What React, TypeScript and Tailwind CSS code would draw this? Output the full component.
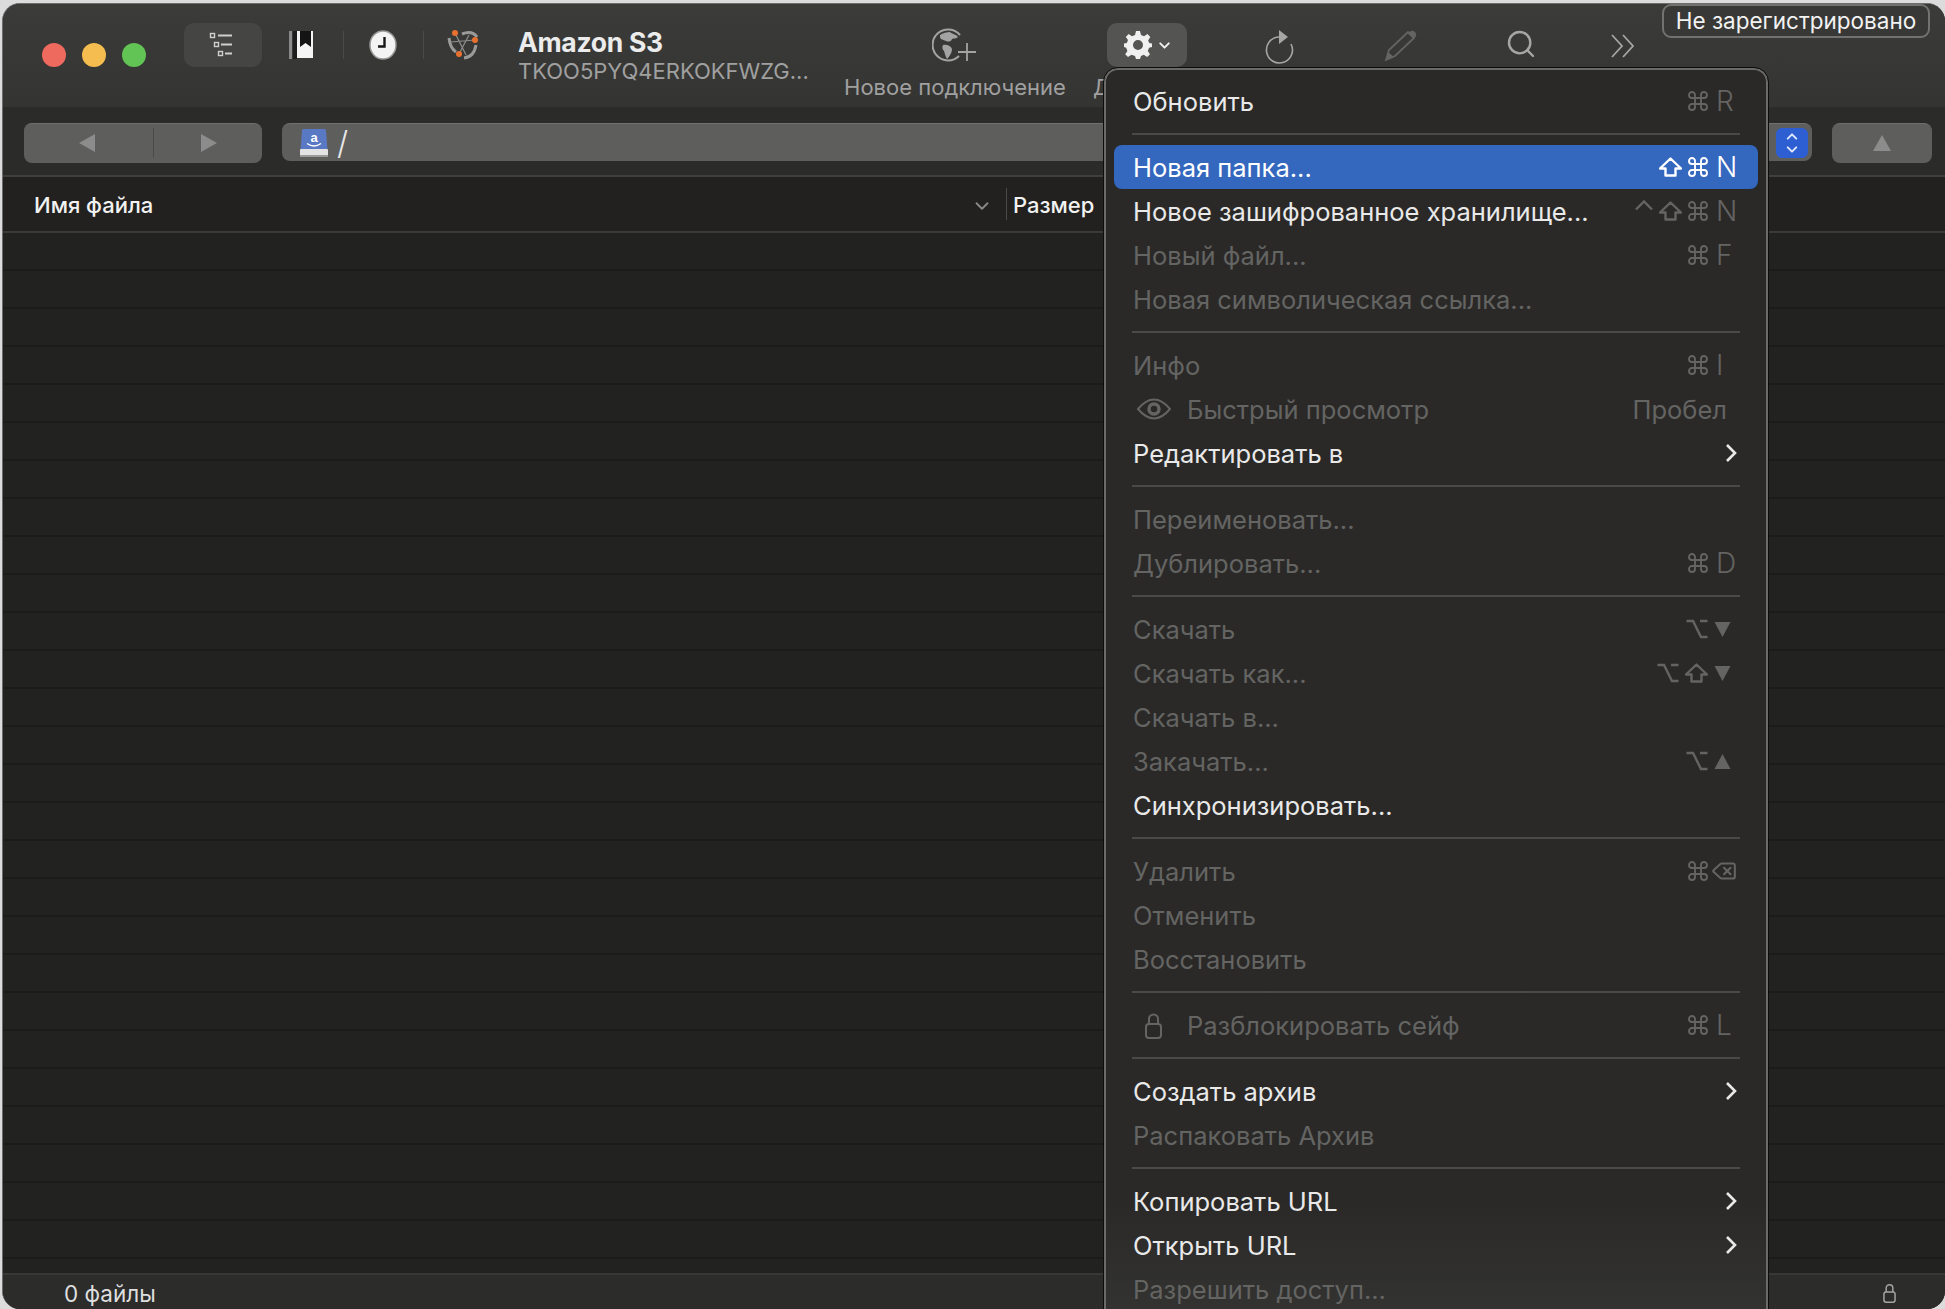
import React from "react";
import { Command, ChevronUp, ChevronDown, Delete, Search } from "lucide-react";

type Mod = "ctrl" | "opt" | "shift" | "cmd";
type Item = {
  t: string;
  on?: boolean;
  sel?: boolean;
  mods?: Mod[];
  key?: string;
  sub?: boolean;
  icon?: "eye" | "lock";
  side?: string;
};
type Section = Item[];

const sections: Section[] = [
  [{ t: "Обновить", on: true, mods: ["cmd"], key: "R" }],
  [
    { t: "Новая папка...", on: true, sel: true, mods: ["shift", "cmd"], key: "N" },
    { t: "Новое зашифрованное хранилище...", on: true, mods: ["ctrl", "shift", "cmd"], key: "N" },
    { t: "Новый файл...", mods: ["cmd"], key: "F" },
    { t: "Новая символическая ссылка..." },
  ],
  [
    { t: "Инфо", mods: ["cmd"], key: "I" },
    { t: "Быстрый просмотр", icon: "eye", side: "Пробел" },
    { t: "Редактировать в", on: true, sub: true },
  ],
  [{ t: "Переименовать..." }, { t: "Дублировать...", mods: ["cmd"], key: "D" }],
  [
    { t: "Скачать", mods: ["opt"], key: "down" },
    { t: "Скачать как...", mods: ["opt", "shift"], key: "down" },
    { t: "Скачать в..." },
    { t: "Закачать...", mods: ["opt"], key: "up" },
    { t: "Синхронизировать...", on: true },
  ],
  [{ t: "Удалить", mods: ["cmd"], key: "del" }, { t: "Отменить" }, { t: "Восстановить" }],
  [{ t: "Разблокировать сейф", icon: "lock", mods: ["cmd"], key: "L" }],
  [{ t: "Создать архив", on: true, sub: true }, { t: "Распаковать Архив" }],
  [
    { t: "Копировать URL", on: true, sub: true },
    { t: "Открыть URL", on: true, sub: true },
    { t: "Разрешить доступ..." },
  ],
];

function ModIcon({ m }: { m: Mod }) {
  if (m === "cmd") return <Command size={24} strokeWidth={1.900} className="-mx-[2px]" />;
  if (m === "opt")
    return (
      <svg width="22" height="20" viewBox="0 0 22 20" fill="none" stroke="currentColor" strokeWidth="2.400">
        <path d="M0.500 2h6.500l8 16h6.500M14 2h7.500" />
      </svg>
    );
  if (m === "shift")
    return (
      <svg width="23" height="20" viewBox="0 0 23 20" fill="none" stroke="currentColor" strokeWidth="2.400" strokeLinejoin="round">
        <path d="M11.500 1.500L22 11.500h-5.500v7h-10v-7H1z" />
      </svg>
    );
  return (
    <svg width="18" height="20" viewBox="0 0 18 20" fill="none" stroke="currentColor" strokeWidth="2.400" className="-mt-[6px]">
      <path d="M1 11.500L9 3.500l8 8" />
    </svg>
  );
}

function KeyCap({ k }: { k: string }) {
  if (k === "down")
    return (
      <svg width="17" height="17" viewBox="0 0 17 17">
        <path d="M0.500 1h16L8.500 16z" fill="currentColor" />
      </svg>
    );
  if (k === "up")
    return (
      <svg width="17" height="17" viewBox="0 0 17 17">
        <path d="M0.500 16h16L8.500 1z" fill="currentColor" />
      </svg>
    );
  if (k === "del") return <Delete size={26} strokeWidth={1.900} className="-ml-[3px]" />;
  return <span className="pl-[2px] text-[28px] leading-none font-light">{k}</span>;
}

function LockGlyph({ w, h }: { w: number; h: number }) {
  return (
    <svg width={w} height={h} viewBox="0 0 17 27" fill="none" stroke="currentColor" strokeWidth="2">
      <path d="M4 12V7a4.500 4.500 0 019 0v5" />
      <rect x="1" y="12" width="15" height="14" rx="3" />
    </svg>
  );
}

function EyeGlyph() {
  return (
    <svg width="34" height="24" viewBox="0 0 34 24" fill="none" stroke="currentColor">
      <path d="M1 12Q17-7 33 12 17 31 1 12z" strokeWidth="2" />
      <circle cx="17" cy="12" r="5" strokeWidth="3.500" />
    </svg>
  );
}

function MenuRow({ item }: { item: Item }) {
  const textColor = item.sel ? "text-white" : item.on ? "text-[#e9e9e9]" : "text-[#646462]";
  const shortcutColor = item.sel ? "text-white" : "text-[#646462]";
  return (
    <div
      className={`mx-[8px] flex h-[44px] shrink-0 items-center rounded-[8px] pl-[19px] ${item.sel ? "bg-[#3467be]" : ""} ${textColor}`}
    >
      {item.icon === "eye" && (
        <div className="flex w-[54px] shrink-0 items-center pl-[4px]">
          <EyeGlyph />
        </div>
      )}
      {item.icon === "lock" && (
        <div className="flex w-[54px] shrink-0 items-center pl-[12px]">
          <LockGlyph w={17} h={27} />
        </div>
      )}
      <span className="flex-1 truncate pt-[2px]">{item.t}</span>
      {item.side && <span className={`pt-[2px] pr-[31px] ${shortcutColor}`}>{item.side}</span>}
      {item.mods && (
        <div className={`flex items-center justify-end gap-[6px] ${shortcutColor}`}>
          {item.mods.map((m) => (
            <ModIcon key={m} m={m} />
          ))}
        </div>
      )}
      {item.key && (
        <div className={`flex w-[50px] shrink-0 items-center pl-[6px] ${shortcutColor}`}>
          <KeyCap k={item.key} />
        </div>
      )}
      {item.sub && (
        <div className="flex w-[33px] shrink-0 items-center text-[#e9e9e9]">
          <svg width="12" height="20" viewBox="0 0 12 20" fill="none" stroke="currentColor" strokeWidth="2.600">
            <path d="M2 2l8 8-8 8" />
          </svg>
        </div>
      )}
    </div>
  );
}

function BookmarkIcon() {
  return (
    <svg width="26" height="30" viewBox="0 0 26 30">
      <rect x="0" y="1" width="3" height="28" fill="#8a8a8a" />
      <rect x="4" y="1" width="4" height="28" fill="#1d1d1d" />
      <path d="M8 1h16v27H8z" fill="#f4f4f4" />
      <path d="M11 1h11v16l-5.500-4-5.500 4z" fill="#141414" />
    </svg>
  );
}

function ClockIcon() {
  return (
    <svg width="28" height="30" viewBox="0 0 28 30">
      <ellipse cx="14" cy="15" rx="13" ry="14" fill="#f3f3f3" stroke="#9a9a9a" strokeWidth="1.500" />
      <path d="M15.500 7v9.500H9" fill="none" stroke="#161616" strokeWidth="2.400" />
    </svg>
  );
}

function NetworkIcon() {
  return (
    <svg width="32" height="30" viewBox="0 0 32 30" fill="none">
      <path d="M15 4Q25 0 30 7M2 8Q3 18 9 22M17 28Q27 27 29 15" stroke="#9a9a9a" strokeWidth="3" />
      <path d="M8 3l11 22M28 10L4 12M12 24L22 5" stroke="#8e8e8e" strokeWidth="1.200" />
      <circle cx="8" cy="3" r="3" fill="#e8702f" />
      <circle cx="28" cy="10" r="3" fill="#e8702f" />
      <circle cx="12" cy="24" r="3" fill="#e8702f" />
    </svg>
  );
}

function TreeIcon() {
  return (
    <svg width="24" height="28" viewBox="0 0 24 28" fill="none" stroke="#cfcfcf">
      <rect x="1.500" y="2.500" width="4" height="4" strokeWidth="1.400" />
      <path d="M9 4.500h14" strokeWidth="1.800" />
      <rect x="5.500" y="11.500" width="4" height="4" strokeWidth="1.400" />
      <path d="M12 13.500h11" strokeWidth="1.800" />
      <rect x="9.500" y="20.500" width="4" height="4" strokeWidth="1.400" />
      <path d="M16 22.500h7" strokeWidth="1.800" />
    </svg>
  );
}

function GlobeAdd() {
  return (
    <svg width="46" height="36" viewBox="0 0 46 36" fill="none">
      <path d="M27 28A15.500 15.500 0 1128 7" stroke="#a3a3a3" strokeWidth="2" />
      <path d="M8 7c3-2 7-3 10-3 2 2 6 2 8 5-2 2-4 1-6 2-1 3-4 3-6 2l-5-2c-1-1-1-2-1-4z" fill="#a3a3a3" />
      <path d="M11 17c4-1 8 1 9 4 0 4-3 8-5 10-2-3-2-6-3-8-2-2-2-4-1-6z" fill="#a3a3a3" />
      <path d="M35 15v18M26 24h18" stroke="#a3a3a3" strokeWidth="1.800" />
    </svg>
  );
}

function GearIcon() {
  return (
    <svg width="28" height="28" viewBox="0 0 28 28">
      <path
        fillRule="evenodd"
        fill="#f0f0f0"
        d="M12 0h4l1 4 3 1.300 3.500-2.200 2.800 2.800L24.100 9.400 25.300 12 28 12.500v3.500l-2.900.800L23.800 20l2.200 3.200-2.800 2.800-3.500-2.200L17 25l-1 3h-4l-1-3-3.500-1.200L4 26l-2.800-2.800L3.400 20l-1.200-3.200L0 16v-3.500l2.800-.600L4 9 1.800 5.900 4.600 3.100 8 5.300 11 4zM14 9a5 5 0 100 10 5 5 0 000-10z"
      />
    </svg>
  );
}

function ReloadIcon() {
  return (
    <svg width="32" height="38" viewBox="0 0 32 38" fill="none" className="absolute top-[26px] left-[1263px]">
      <path d="M16 11A13 13 0 1028 18" stroke="#a6a6a6" strokeWidth="1.600" />
      <path d="M16 4l9 7-9 7z" fill="#a6a6a6" />
    </svg>
  );
}

function PencilIcon() {
  return (
    <svg width="34" height="34" viewBox="0 0 34 34" fill="none" className="absolute top-[28px] left-[1384px]">
      <path d="M2 32l3-10L24 4l6 6L11 28z" stroke="#646462" strokeWidth="1.800" />
      <path d="M2 32l2-8 6 5z" fill="#646462" />
      <path d="M26 3.500a4 4 0 015.500 5.500l-2 2-5.500-5.500z" fill="#646462" />
    </svg>
  );
}

function DoubleChevron() {
  return (
    <svg width="24" height="24" viewBox="0 0 24 24" fill="none" stroke="#a6a6a6" strokeWidth="1.800" className="absolute top-[34px] left-[1611px]">
      <path d="M1 1l10 11L1 23M12 1l10 11-10 11" />
    </svg>
  );
}

function DiskIcon() {
  return (
    <svg width="30" height="30" viewBox="0 0 30 30">
      <path d="M3 2.500Q3 1 4.500 1h21Q27 1 27 2.500L28.500 22H1.500z" fill="#5a79c5" />
      <rect x="1" y="21" width="28" height="8" rx="1" fill="#e4e4e4" />
      <rect x="1" y="27" width="28" height="2" fill="#9c9c9c" />
      <path d="M8 15.500q7 5 14 0" stroke="#fff" fill="none" strokeWidth="1.300" />
      <text x="15" y="14" textAnchor="middle" fontSize="13" fontWeight="700" fill="#fff" fontFamily="Liberation Sans, sans-serif">a</text>
    </svg>
  );
}

function Sep() {
  return (
    <div className="mx-[26px] flex h-[22px] shrink-0 items-center">
      <div className="h-[2px] w-full bg-[#4a4a48]" />
    </div>
  );
}

export default function App() {
  return (
    <div className="relative h-[1309px] w-[1945px] overflow-hidden bg-[#dcdcdc] font-['Inter','Noto_Sans',sans-serif]">
      {/* Window */}
      <div className="mt-[3px] ml-[2px] flex h-[1306px] w-[1943px] flex-col overflow-hidden rounded-[18px] border border-r-0 border-b-0 border-[#6d6d6d] bg-[#222120]">
        {/* Title bar */}
        <div className="flex h-[103px] shrink-0 items-start bg-gradient-to-b from-[#3b3b39] to-[#343432] text-[#a0a0a0]">
          <div className="mt-[39px] ml-[39px] flex gap-[16px]">
            <div className="h-[24px] w-[24px] rounded-full bg-[#ee6a5f]" />
            <div className="h-[24px] w-[24px] rounded-full bg-[#f5bd4f]" />
            <div className="h-[24px] w-[24px] rounded-full bg-[#61c454]" />
          </div>
          <div className="mt-[19px] ml-[38px] flex h-[44px] w-[78px] items-center justify-center rounded-[10px] bg-[#454543] pr-[4px]">
            <TreeIcon />
          </div>
          <div className="mt-[26px] ml-[27px] flex h-[30px] items-center">
            <BookmarkIcon />
          </div>
          <div className="mt-[27px] ml-[28px] h-[28px] w-[1px] bg-[#4a4a48]" />
          <div className="mt-[26px] ml-[25px] flex h-[30px] items-center">
            <ClockIcon />
          </div>
          <div className="mt-[27px] ml-[26px] h-[28px] w-[1px] bg-[#4a4a48]" />
          <div className="mt-[26px] ml-[23px] flex h-[30px] items-center">
            <NetworkIcon />
          </div>
          <div className="mt-[20px] ml-[39px] flex w-[313px] flex-col">
            <span className="h-[36px] text-[26.500px] leading-[36px] font-bold tracking-[-0.3px] text-[#ececec]">Amazon S3</span>
            <span className="-mt-[4px] h-[30px] text-[22px] leading-[30px] text-[#a0a0a0]">TKOO5PYQ4ERKOKFWZG...</span>
          </div>
          <div className="mt-[24px] flex w-[248px] flex-col items-center">
            <GlobeAdd />
            <span className="mt-[9px] text-[22px] leading-[28px] whitespace-nowrap">Новое подключение</span>
          </div>
          <span className="mt-[69px] ml-[14px] text-[22px] leading-[28px]">Д</span>
        </div>

        {/* Address bar */}
        <div className="flex h-[70px] shrink-0 items-start border-b-2 border-[#3f3f3e] bg-[#2b2b2a] pt-[16px]">
          <div className="ml-[21px] flex h-[40px] w-[238px] items-center rounded-[8px] border-t border-[#6e6e6e] bg-[#5e5e5d] pb-[2px] text-[#8c8c8c]">
            <svg width="16" height="18" viewBox="0 0 16 18" className="ml-[55px]">
              <path d="M0 9L16 0v18z" fill="currentColor" />
            </svg>
            <div className="ml-[58px] h-[30px] w-[1px] bg-[#4a4a4a]" />
            <svg width="16" height="18" viewBox="0 0 16 18" className="ml-[47px]">
              <path d="M16 9L0 0v18z" fill="currentColor" />
            </svg>
          </div>
          <div className="ml-[20px] flex h-[38px] w-[1530px] items-center rounded-[8px] border-t border-[#707070] bg-[#5e5e5d]">
            <div className="ml-[17px] flex items-center">
              <DiskIcon />
            </div>
            <span className="ml-[8px] text-[32px] leading-none font-light text-[#e8e8e8]">/</span>
            <div className="mr-[4px] ml-auto flex h-[30px] w-[32px] flex-col items-center justify-center rounded-[6px] bg-[#2d5fd3] text-[#dfe7fb]">
              <ChevronUp size={18} strokeWidth={2.800} className="-mb-[2px]" />
              <ChevronDown size={18} strokeWidth={2.800} className="-mt-[2px]" />
            </div>
          </div>
          <div className="ml-[20px] flex h-[40px] w-[100px] items-center justify-center rounded-[8px] border-t border-[#6e6e6e] bg-[#5e5e5d] pb-[2px] text-[#8c8c8c]">
            <svg width="18" height="16" viewBox="0 0 18 16">
              <path d="M9 0L18 16H0z" fill="currentColor" />
            </svg>
          </div>
        </div>

        {/* Column header */}
        <div className="flex h-[56px] shrink-0 items-center border-b-2 border-[#3a3a39] bg-[#222120] text-[22px] font-medium text-[#f2f2f2]">
          <span className="ml-[31px] w-[937px] pt-[2px]">Имя файла</span>
          <ChevronDown size={22} strokeWidth={2} className="mt-[3px] text-[#8a8a8a]" />
          <div className="ml-[13px] h-[32px] w-[1px] bg-[#4a4a48]" />
          <span className="ml-[6px] pt-[2px]">Размер</span>
        </div>

        {/* Rows */}
        <div className="flex min-h-0 flex-1 flex-col overflow-hidden bg-[#222220]">
          {Array.from({ length: 28 }, (_, i) => (
            <div key={i} className="h-[38px] shrink-0 border-b-2 border-[#1b1b1a]" />
          ))}
        </div>

        {/* Status bar */}
        <div className="flex h-[36px] shrink-0 items-center border-t-2 border-[#383837] bg-[#2c2c2b] text-[22.500px] text-[#dedede]">
          <span className="ml-[61px] pt-[3px]">0 файлы</span>
          <div className="mt-[2px] mr-[49px] ml-auto flex text-[#a5a5a5]">
            <LockGlyph w={13} h={20} />
          </div>
        </div>
      </div>

      {/* Registration badge */}
      <div className="absolute top-[4px] left-[1662px] flex h-[34px] w-[268px] items-center justify-center rounded-[9px] border-2 border-[#727270] bg-[#383836] text-[22.500px] whitespace-nowrap text-[#f2f2f2]">
        Не зарегистрировано
      </div>

      {/* Gear button and right toolbar icons */}
      <div className="absolute top-[23px] left-[1107px] flex h-[44px] w-[80px] items-center gap-[4px] rounded-[10px] bg-[#545452] pl-[17px]">
        <GearIcon />
        <ChevronDown size={17} strokeWidth={2.800} className="text-[#f0f0f0]" />
      </div>
      <ReloadIcon />
      <PencilIcon />
      <Search size={32} strokeWidth={1.800} className="absolute top-[28px] left-[1505px] text-[#a6a6a6]" />
      <DoubleChevron />

      {/* Menu */}
      <div className="absolute top-[68px] left-[1104px] flex h-[1260px] w-[664px] flex-col rounded-[14px] border-2 border-[#6a6a68] bg-gradient-to-b from-[#2a2928] from-[90%] to-[#343432] pt-[9px] text-[25.500px] outline-1 outline-[#0d0d0d]">
        {sections.map((sec, i) => (
          <React.Fragment key={i}>
            {i > 0 && <Sep />}
            {sec.map((item) => (
              <MenuRow key={item.t} item={item} />
            ))}
          </React.Fragment>
        ))}
      </div>
    </div>
  );
}
